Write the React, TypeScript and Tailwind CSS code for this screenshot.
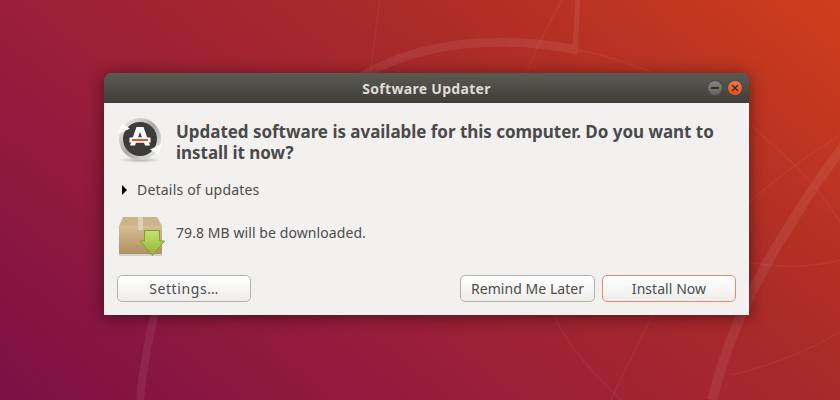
const FONT = "font-['Noto_Sans','Open_Sans',sans-serif]";

function Wallpaper() {
  return (
    <svg className="absolute inset-0" width="840" height="400" viewBox="0 0 840 400" fill="none">
      <defs>
        <linearGradient id="wall" x1="0" y1="400" x2="523" y2="-254" gradientUnits="userSpaceOnUse">
          <stop offset="0" stopColor="#7c1045" />
          <stop offset="0.34" stopColor="#981d3b" />
          <stop offset="0.66" stopColor="#ab2b28" />
          <stop offset="1" stopColor="#cf3e1c" />
        </linearGradient>
      </defs>
      <rect width="840" height="400" fill="url(#wall)" />
      {/* wide bands */}
      <g stroke="#ffffff" opacity="0.07">
        <path d="M140 400C143 370 148 340 155 312" strokeWidth="8" />
        <path d="M355 80C420 40 500 35 578 50" strokeWidth="9" />
        <path d="M578 0 575 48" strokeWidth="5" />
        <path d="M712 400C725 350 745 295 790 225C805 200 825 170 845 145" strokeWidth="10" />
      </g>
      {/* thin lines */}
      <g stroke="#ffffff" opacity="0.045" strokeWidth="1.500">
        <path d="M380 0 370 73" />
        <path d="M562 0C548 25 535 50 527 73" />
        <path d="M578 50C610 56 640 66 668 80" />
        <path d="M554 315C570 350 595 375 621 400" />
        <path d="M653 315C635 350 620 380 611 400" />
        <path d="M745 120 795 165C815 185 830 205 840 222" />
        <path d="M745 205 795 165C810 155 825 145 840 135" />
        <path d="M745 261C775 268 810 268 840 260" />
        <path d="M731 375C775 365 810 350 840 332" />
      </g>
    </svg>
  );
}

function UpdaterIcon() {
  return (
    <svg width="46" height="50" viewBox="0 0 46 50">
      <defs>
        <linearGradient id="ring" x1="0" y1="0" x2="1" y2="1">
          <stop offset="0" stopColor="#f7f7f5" />
          <stop offset="0.5" stopColor="#a9a9a7" />
          <stop offset="1" stopColor="#f2f2f0" />
        </linearGradient>
        <radialGradient id="shade">
          <stop offset="0" stopColor="#000" stopOpacity="0.25" />
          <stop offset="1" stopColor="#000" stopOpacity="0" />
        </radialGradient>
      </defs>
      <ellipse cx="23" cy="43" rx="22" ry="3" fill="url(#shade)" />
      <circle cx="23" cy="22" r="21" fill="url(#ring)" />
      <circle cx="23" cy="22" r="17" fill="#3d3c3a" />
      {/* sync arrows on the ring */}
      <path d="M1.500 17 4.500 6.500 13 11.500Z" fill="#fff" />
      <path d="M44.500 27 41.500 37.500 33 32.500Z" fill="#fff" />
      {/* the letter mark */}
      <path
        fillRule="evenodd"
        d="M19.500 10h7L33 28.500h-5L27 25.500h-8l-1 3h-5ZM23 15 21 20.500h4Z"
        fill="#fff"
      />
      <path d="M12.500 20.500h21v5h-21Z" fill="#fff" />
      <path d="M15 22h16v2H15Z" fill="#e8541e" />
    </svg>
  );
}

function PackageIcon() {
  return (
    <svg width="47" height="40" viewBox="0 0 47 40">
      <defs>
        <linearGradient id="box" x1="0" y1="0" x2="0" y2="1">
          <stop offset="0" stopColor="#d8bd95" />
          <stop offset="1" stopColor="#b09060" />
        </linearGradient>
        <linearGradient id="arrow" x1="0" y1="0" x2="0" y2="1">
          <stop offset="0" stopColor="#c6e070" />
          <stop offset="1" stopColor="#93b536" />
        </linearGradient>
      </defs>
      <rect x="1" y="36" width="43" height="3" fill="#000" opacity="0.13" />
      <path d="M5 0h34l5 9H1Z" fill="#cdb38c" />
      <path d="M1 9h43v27a1 1 0 0 1-1 1H2a1 1 0 0 1-1-1Z" fill="url(#box)" />
      <path d="M20 0h5v13h-5Z" fill="#e6d8c2" opacity="0.75" />
      <path d="M26.500 13.500h15V24h5L34.500 38.500 22.500 24h4Z" fill="url(#arrow)" stroke="#80a02f" strokeWidth="1" />
    </svg>
  );
}

function Button({ label, width, accent, wide }: { label: string; width: string; accent?: boolean; wide?: boolean }) {
  return (
    <button
      className={`${width} h-[27px] rounded-[5px] border bg-gradient-to-b from-white to-[#eeedeb] text-[14px] leading-[20px] text-[#4c4c4c] ${
        wide ? "tracking-[0.6px]" : "tracking-[0.05px]"
      } ${accent ? "border-[#df8d6e]" : "border-[#b3b1ac]"}`}
    >
      {label}
    </button>
  );
}

export default function App() {
  return (
    <div className={`relative h-[400px] w-[840px] overflow-hidden ${FONT}`}>
      <Wallpaper />
      <div className="relative pl-[104px] pt-[73px]">
        <div className="w-[645px] overflow-hidden rounded-t-[7px] shadow-[0_2px_16px_rgba(0,0,0,0.5)]">
          {/* Title bar */}
          <div className="relative flex h-[30px] items-center justify-center bg-gradient-to-b from-[#5b5a52] to-[#3f3e3a]">
            <span className="text-[14px] font-bold tracking-[0.3px] text-[#dfdbd2]">Software Updater</span>
            <div className="absolute right-[6px] top-[7px] flex gap-[4px]">
              <span className="flex h-[16px] w-[16px] items-center justify-center rounded-full border border-[#4a4944] bg-gradient-to-b from-[#84837e] to-[#63625d]">
                <span className="h-[1.500px] w-[8px] bg-[#33322e]" />
              </span>
              <span className="flex h-[16px] w-[16px] items-center justify-center rounded-full border border-[#4a4944] bg-gradient-to-b from-[#f4793f] to-[#e4501f]">
                <svg width="8" height="8" viewBox="0 0 8 8" stroke="#3c2a20" strokeWidth="1.500">
                  <path d="M1 1l6 6M7 1 1 7" />
                </svg>
              </span>
            </div>
          </div>

          {/* Body */}
          <div className="flex h-[212px] flex-col bg-[#f2f1ef] px-[13px] pt-[14px] text-[#4c4c4c]">
            <div className="flex gap-[13px]">
              <UpdaterIcon />
              <p className="mt-[4px] w-[560px] text-[17px] font-bold leading-[21px] tracking-[-0.03px] text-[#4a4a4a]">
                Updated software is available for this computer. Do you want to install it now?
              </p>
            </div>
            <div className="mt-[13px] flex items-center gap-[10px] pl-[5px] text-[14px] leading-[20px] tracking-[0.2px]">
              <span className="h-0 w-0 border-y-[5px] border-l-[5px] border-y-transparent border-l-black" />
              <span>Details of updates</span>
            </div>
            <div className="mt-[17px] flex items-start gap-[11px] pl-[1px] text-[14px] leading-[20px] tracking-[0.08px]">
              <PackageIcon />
              <span className="mt-[6px]">79.8 MB will be downloaded.</span>
            </div>
            <div className="mt-[18px] flex items-center">
              <Button label="Settings…" width="w-[134px]" wide />
              <div className="ml-auto flex gap-[7px]">
                <Button label="Remind Me Later" width="w-[135px]" />
                <Button label="Install Now" width="w-[134px]" accent />
              </div>
            </div>
          </div>
        </div>
      </div>
    </div>
  );
}
